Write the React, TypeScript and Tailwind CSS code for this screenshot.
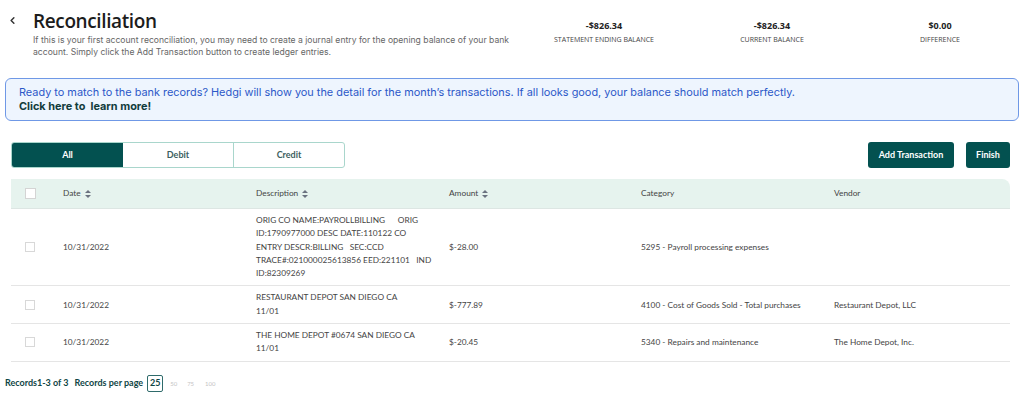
import { ChevronLeft } from 'lucide-react'

const rows = [
  {
    date: '10/31/2022',
    desc: [
      'ORIG CO NAME:PAYROLLBILLING      ORIG',
      'ID:1790977000 DESC DATE:110122 CO',
      'ENTRY DESCR:BILLING   SEC:CCD',
      'TRACE#:021000025613856 EED:221101   IND',
      'ID:82309269',
    ],
    amount: '$-28.00',
    category: '5295 - Payroll processing expenses',
    vendor: '',
  },
  {
    date: '10/31/2022',
    desc: ['RESTAURANT DEPOT SAN DIEGO CA', '11/01'],
    amount: '$-777.89',
    category: '4100 - Cost of Goods Sold - Total purchases',
    vendor: 'Restaurant Depot, LLC',
  },
  {
    date: '10/31/2022',
    desc: ['THE HOME DEPOT #0674 SAN DIEGO CA', '11/01'],
    amount: '$-20.45',
    category: '5340 - Repairs and maintenance',
    vendor: 'The Home Depot, Inc.',
  },
]

function SortIcon() {
  return (
    <svg width="6" height="8" viewBox="0 0 6 8" className="ml-1 inline-block">
      <path d="M3 0 L6 3 H0 Z" fill="#6b7280" />
      <path d="M3 8 L6 5 H0 Z" fill="#6b7280" />
    </svg>
  )
}

function Stat({ value, label }: { value: string; label: string }) {
  return (
    <div className="w-[168px] flex flex-col items-center">
      <div className="text-[9px] leading-[12px] font-bold text-[#222]">{value}</div>
      <div className="text-[7px] leading-[10px] text-[#444] mt-[3px] uppercase">{label}</div>
    </div>
  )
}

export default function App() {
  return (
    <div className="w-[1024px] h-[399px] bg-white overflow-hidden font-['Open_Sans',sans-serif]">
      {/* 头部 */}
      <div className="flex pt-[10px]">
        <div className="w-[33px] shrink-0 pl-[7px] pt-[5px]">
          <ChevronLeft className="w-[11px] h-[11px] text-[#333]" strokeWidth={3.2} />
        </div>
        <div className="flex-1 min-w-0">
          <h1 className="text-[19px] leading-[23px] font-semibold text-[#1c1c1c] tracking-[-0.02em]">
            Reconciliation
          </h1>
          <p className="text-[8.6px] leading-[12px] text-[#666] mt-[1px] font-['Inter',sans-serif]">
            If this is your first account reconciliation, you may need to create a journal entry for the opening balance of your bank account. Simply click the Add Transaction button to create ledger entries.
          </p>
        </div>
        <div className="flex w-[504px] shrink-0 pt-[10px]">
          <Stat value="-$826.34" label="Statement ending balance" />
          <Stat value="-$826.34" label="Current balance" />
          <Stat value="$0.00" label="Difference" />
        </div>
      </div>

      {/* 提示 */}
      <div className="mx-[5px] mt-[20px] h-[43px] border border-[#6f98e6] bg-[#eef5fe] rounded-[6px] px-[13px] pt-[6px] font-['Inter',sans-serif]">
        <div className="text-[10.9px] leading-[14px] text-[#2c58c8]">
          Ready to match to the bank records? Hedgi will show you the detail for the month’s transactions. If all looks good, your balance should match perfectly.
        </div>
        <div className="text-[10.9px] leading-[14px] font-bold text-[#123c3c]">Click here to&nbsp; learn more!</div>
      </div>

      {/* 工具栏 */}
      <div className="flex items-center justify-between mt-[21px] ml-[11px] mr-[14px] font-['Lato',sans-serif]">
        <div className="flex h-[26px] border border-[#a9d6cc] rounded-[3px] overflow-hidden">
          <button className="w-[111px] bg-[#035150] text-white text-[9px] font-bold">All</button>
          <button className="w-[111px] border-r border-[#a9d6cc] text-[#3c5e5e] text-[9px] font-bold">Debit</button>
          <button className="w-[110px] text-[#3c5e5e] text-[9px] font-bold">Credit</button>
        </div>
        <div className="flex gap-[12px]">
          <button className="h-[26px] w-[86px] bg-[#035150] text-white text-[9px] font-bold rounded-[3px]">
            Add Transaction
          </button>
          <button className="h-[26px] w-[44px] bg-[#035150] text-white text-[9px] font-bold rounded-[3px]">
            Finish
          </button>
        </div>
      </div>

      {/* 表格 */}
      <div className="ml-[11px] mr-[14px] mt-[11px] font-['Lato',sans-serif] text-[8.3px] text-[#444]">
        <div className="flex items-center h-[30px] bg-[#e6f3ee] rounded-tr-[8px] border-b border-[#dde6e3]">
          <div className="w-[52px] pl-[14px]">
            <div className="w-[11px] h-[11px] bg-white border border-[#d4d4d4]" />
          </div>
          <div className="w-[193px] flex items-center">Date<SortIcon /></div>
          <div className="w-[193px] flex items-center">Description<SortIcon /></div>
          <div className="w-[192px] flex items-center">Amount<SortIcon /></div>
          <div className="w-[193px]">Category</div>
          <div className="flex-1">Vendor</div>
        </div>
        {rows.map((r, i) => (
          <div key={i} className="flex items-center border-b border-[#e5e5e5] py-[5px]">
            <div className="w-[52px] pl-[14px]">
              <div className="w-[10px] h-[10px] bg-white border border-[#d8d8d8]" />
            </div>
            <div className="w-[193px]">{r.date}</div>
            <div className="w-[193px] leading-[13.3px] whitespace-pre">
              {r.desc.map((l, j) => (
                <div key={j}>{l}</div>
              ))}
            </div>
            <div className="w-[192px]">{r.amount}</div>
            <div className="w-[193px]">{r.category}</div>
            <div className="flex-1">{r.vendor}</div>
          </div>
        ))}
      </div>

      {/* 底部 */}
      <div className="flex items-center mt-[13px] ml-[5px] font-['Lato',sans-serif] text-[9px]">
        <span className="font-bold text-[#0f4545]">Records1-3 of 3</span>
        <span className="font-bold text-[#0f4545] ml-[6px]">Records per page</span>
        <span className="ml-[4px] w-[16px] h-[17px] border border-[#2f6b6b] rounded-[2px] flex items-center justify-center text-[#0f4545] font-bold">25</span>
        <span className="ml-[7px] text-[6px] text-[#c4c4c4]">50</span>
        <span className="ml-[10px] text-[6px] text-[#c4c4c4]">75</span>
        <span className="ml-[11px] text-[6px] text-[#c4c4c4]">100</span>
      </div>
    </div>
  )
}
